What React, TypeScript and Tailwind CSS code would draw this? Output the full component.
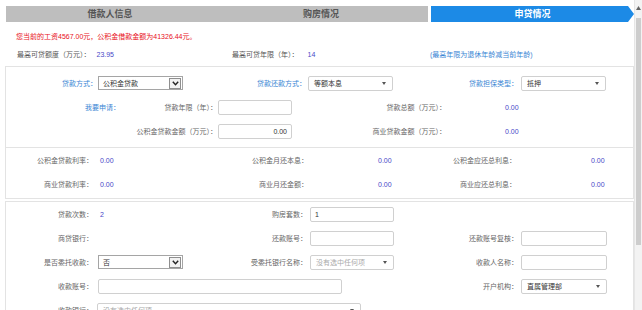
import React from "react";

const blue = "text-[#3a86d4]";
const val = "text-[#4848c8]";

function Chevron() {
  return (
    <svg width="7" height="5" viewBox="0 0 7 5">
      <path d="M0.8 0.8 L3.5 3.8 L6.2 0.8" fill="none" stroke="#222" strokeWidth="1.4" />
    </svg>
  );
}

function OldSelect({ value, className = "" }: { value: string; className?: string }) {
  return (
    <div className={`flex h-[14px] w-[85px] shrink-0 items-center border border-[#a5a5a5] bg-white pl-[4px] ${className}`}>
      <span className="flex-1 text-[#333]">{value}</span>
      <span className="mr-[1px] flex h-[11px] w-[12px] items-center justify-center border border-[#8f8f8f] bg-[#f2f2f2]">
        <Chevron />
      </span>
    </div>
  );
}

function Select({ value, placeholder = false, className = "" }: { value: string; placeholder?: boolean; className?: string }) {
  return (
    <div className={`flex h-[15px] shrink-0 items-center justify-between rounded-[2px] border border-[#d0d0d0] bg-white pl-[5px] pr-[6px] ${className}`}>
      <span className={placeholder ? "text-[#aaa]" : "text-[#333]"}>{value}</span>
      <svg width="4" height="3" viewBox="0 0 4 3">
        <path d="M0 0 L4 0 L2 3 Z" fill="#555" />
      </svg>
    </div>
  );
}

function Input({ value = "", className = "" }: { value?: string; className?: string }) {
  return (
    <div className={`flex h-[15px] shrink-0 items-center rounded-[2px] border border-[#d0d0d0] bg-white px-[4px] text-[#333] ${className}`}>
      {value}
    </div>
  );
}

function Label({ text, w, color = "text-[#666]" }: { text: string; w: string; color?: string }) {
  return <div className={`shrink-0 text-right ${w} ${color}`}>{text}</div>;
}

export default function App() {
  return (
    <div className="flex h-[310px] w-[642px] overflow-hidden bg-white font-['Liberation_Sans','Noto_Sans_CJK_SC',sans-serif] text-[7px] leading-none">
      <div className="w-[634px] shrink-0 pl-[5px]">
        {/* tabs */}
        <div className="ml-[1px] mt-[6px] flex h-[16px] text-[9px] font-bold">
          <div className="flex w-[208px] items-center justify-center bg-[#bebebe] text-[#555]">借款人信息</div>
          <div className="flex w-[214px] items-center justify-center bg-[#bebebe] text-[#555]">购房情况</div>
          <div className="ml-[3px] flex flex-1 items-center justify-center bg-[#1c8ae6] text-white [clip-path:polygon(0_0,calc(100%-6px)_0,100%_50%,calc(100%-6px)_100%,0_100%)]">
            申贷情况
          </div>
        </div>

        {/* info */}
        <div className="pb-[4px]">
          <div className="mt-[6px] flex h-[16px] items-center pl-[11px] text-[#e8101a]">
            您当前的工资4567.00元，公积金借款金额为41326.44元。
          </div>
          <div className="mt-[2px] flex h-[16px] items-center">
            <div className="flex w-[227px] items-center pl-[12px]">
              <span className="text-[#555]">最高可贷额度（万元）：</span>
              <span className={`ml-[6px] ${val}`}>23.95</span>
            </div>
            <div className="flex w-[198px] items-center">
              <span className="text-[#555]">最高可贷年限（年）：</span>
              <span className={`ml-[9px] ${val}`}>14</span>
            </div>
            <div className={blue}>(最高年限为退休年龄减当前年龄)</div>
          </div>
        </div>

        {/* loan form */}
        <div className="border border-[#e3e3e3] pb-[4px] pt-[4px]">
          <div className="flex h-[24px] items-center">
            <Label text="贷款方式：" w="w-[91px]" color={blue} />
            <OldSelect value="公积金贷款" className="ml-[1px]" />
            <Label text="贷款还款方式：" w="w-[123px]" color={blue} />
            <Select value="等额本息" className="ml-[2px] w-[85px]" />
            <Label text="贷款担保类型：" w="w-[125px]" color={blue} />
            <Select value="抵押" className="ml-[3px] w-[85px]" />
          </div>
          <div className="flex h-[24px] items-center">
            <Label text="我要申请：" w="w-[114px]" color={blue} />
            <Label text="贷款年限（年）：" w="w-[97px]" />
            <Input className="ml-[1px] w-[74px]" />
            <Label text="贷款总额（万元）：" w="w-[154px]" />
            <span className={`ml-[59px] ${val}`}>0.00</span>
          </div>
          <div className="flex h-[24px] items-center">
            <Label text="公积金贷款金额（万元）：" w="w-[211px]" />
            <Input value="0.00" className="ml-[1px] w-[74px] justify-end" />
            <Label text="商业贷款金额（万元）：" w="w-[154px]" />
            <span className={`ml-[59px] ${val}`}>0.00</span>
          </div>
        </div>

        {/* rates */}
        <div className="border border-t-0 border-[#e3e3e3] pb-[2px]">
          <div className="flex h-[24px] items-center">
            <Label text="公积金贷款利率：" w="w-[87px]" />
            <span className={`w-[107px] shrink-0 pl-[7px] ${val}`}>0.00</span>
            <Label text="公积金月还本息：" w="w-[108px]" />
            <span className={`w-[122px] shrink-0 pl-[70px] ${val}`}>0.00</span>
            <Label text="公积金应还总利息：" w="w-[86px]" />
            <span className={`pl-[75px] ${val}`}>0.00</span>
          </div>
          <div className="flex h-[24px] items-center">
            <Label text="商业贷款利率：" w="w-[87px]" />
            <span className={`w-[107px] shrink-0 pl-[7px] ${val}`}>0.00</span>
            <Label text="商业月还金额：" w="w-[108px]" />
            <span className={`w-[122px] shrink-0 pl-[70px] ${val}`}>0.00</span>
            <Label text="商业应还总利息：" w="w-[86px]" />
            <span className={`pl-[75px] ${val}`}>0.00</span>
          </div>
        </div>

        {/* account */}
        <div className="mt-[2px] border border-b-0 border-[#e3e3e3]">
          <div className="flex h-[24px] items-center">
            <Label text="贷款次数：" w="w-[87px]" />
            <span className={`w-[126px] shrink-0 pl-[7px] ${val}`}>2</span>
            <Label text="购房套数：" w="w-[88px]" />
            <Input value="1" className="ml-[3px] w-[84px]" />
          </div>
          <div className="flex h-[24px] items-center">
            <Label text="商贷银行：" w="w-[87px]" />
            <span className="w-[126px] shrink-0" />
            <Label text="还款账号：" w="w-[88px]" />
            <Input className="ml-[3px] w-[84px]" />
            <Label text="还款账号复核：" w="w-[124px]" />
            <Input className="ml-[3px] w-[86px]" />
          </div>
          <div className="flex h-[24px] items-center">
            <Label text="是否委托收款：" w="w-[87px]" />
            <OldSelect value="否" className="ml-[5px]" />
            <Label text="受委托银行名称：" w="w-[124px]" />
            <Select value="没有选中任何项" placeholder className="ml-[3px] w-[84px]" />
            <Label text="收款人名称：" w="w-[124px]" />
            <Input className="ml-[3px] w-[86px]" />
          </div>
          <div className="flex h-[24px] items-center">
            <Label text="收款账号：" w="w-[87px]" />
            <Input className="ml-[5px] w-[244px]" />
            <Label text="开户机构：" w="w-[176px]" />
            <Select value="直属管理部" className="ml-[3px] w-[86px]" />
          </div>
          <div className="flex h-[24px] items-center">
            <Label text="收款银行：" w="w-[87px]" />
            <Select value="没有选中任何项" placeholder className="ml-[4px] w-[264px]" />
          </div>
        </div>
      </div>

      {/* scrollbar */}
      <div className="flex w-[8px] shrink-0 flex-col border-l border-[#e6e6e6] bg-[#f3f3f3]">
        <div className="flex h-[16px] items-center justify-center">
          <svg width="5" height="4" viewBox="0 0 5 4">
            <path d="M0 4 L5 4 L2.5 0 Z" fill="#666" />
          </svg>
        </div>
        <div className="mx-[1px] mt-[2px] h-[227px] bg-[#cdcdcd]" />
      </div>
    </div>
  );
}
